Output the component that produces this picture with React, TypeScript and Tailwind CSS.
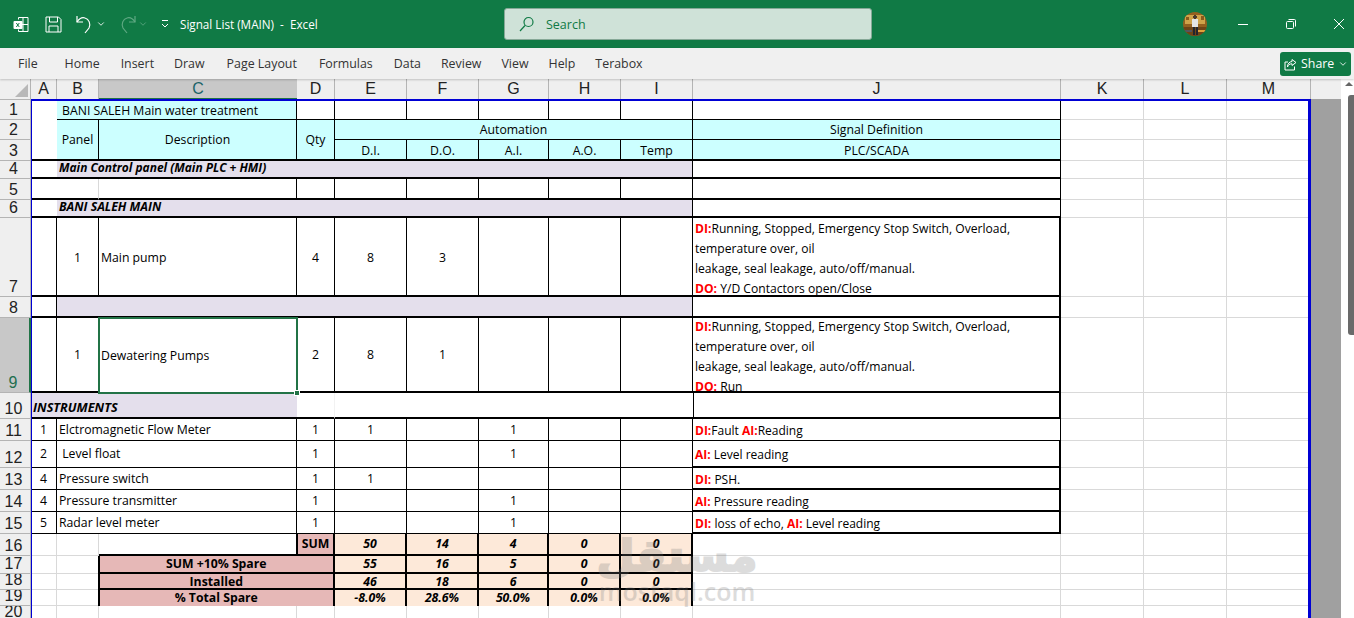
import type { ReactNode } from "react"
import { ChevronDown } from "lucide-react"

const font = "font-['Open_Sans','Noto_Sans',sans-serif]"
const thin = "border-r border-b border-black"
const thick = "border-r border-b-2 border-black"
const blank = "border-r border-b border-[#d9d9d9]"
const jThick = "border-r-2 border-b-2 border-black"
const mid = "flex items-center justify-center"
const tall = "pt-[2px]"
const cyan = "bg-[#ccffff]"
const lav = "bg-[#e4dfec]"
const peach = "bg-[#fde9d9]"
const pink = "bg-[#e6b8b7]"

const tabs = [
  ["Home", "mr-[21px]"], ["Insert", "mr-[20px]"], ["Draw", "mr-[22px]"], ["Page Layout", "mr-[22px]"], ["Formulas", "mr-[21px]"],
  ["Data", "mr-[20px]"], ["Review", "mr-[20px]"], ["View", "mr-[20px]"], ["Help", "mr-[20px]"], ["Terabox", ""],
]

function Cell({ className = "", children }: { className?: string; children?: ReactNode }) {
  return <div className={`min-w-0 overflow-hidden whitespace-nowrap text-[12.25px] leading-[14px] text-black ${className}`}>{children}</div>
}

function Num({ n, sel }: { n: number; sel?: boolean }) {
  return (
    <div className={`flex items-end justify-center overflow-hidden border-b border-[#b4b4b4] pr-[3px] font-['Liberation_Sans',sans-serif] text-[16px] leading-[18px] ${sel ? "border-r-2 border-r-[#217346] bg-[#c8c8c8] text-[#1f6f4f]" : "border-r border-r-[#b4b4b4] bg-[#efefef] text-[#222]"}`}>
      {n}
    </div>
  )
}

function Col({ l, sel }: { l: string; sel?: boolean }) {
  return (
    <div className={`flex items-center justify-center font-['Liberation_Sans',sans-serif] text-[16px] ${sel ? "border-b-2 border-[#217346] bg-[#c8c8c8] text-[#1b6468]" : "border-r border-b border-[#b4b4b4] bg-[#efefef] text-[#222]"}`}>
      {l}
    </div>
  )
}

function Red({ children }: { children: ReactNode }) {
  return <span className="font-bold text-[#ff0000]">{children}</span>
}

function Five({ v, cls }: { v: (string | number)[]; cls: string }) {
  return (
    <>
      {v.map((x, i) => (
        <Cell key={i} className={`${cls} ${mid}`}>{x}</Cell>
      ))}
    </>
  )
}

function Rest() {
  return <><Cell className={blank} /><Cell className={blank} /><Cell className={blank} /></>
}

function Instrument({ n, row, name, e, g, h, j }: { n: number; row: number; name: string; e?: string; g?: string; h: string; j: ReactNode }) {
  return (
    <>
      <Num n={n} />
      <Cell className={`${thin} ${mid}`}>{row}</Cell>
      <Cell className={`${thin} col-span-2 flex items-center pl-[2px]`}><span className="whitespace-pre">{name}</span></Cell>
      <Cell className={`${thin} ${mid}`}>1</Cell>
      <Five v={[e ?? "", "", g ?? "", "", ""]} cls={thin} />
      <Cell className={`${h} flex items-center pt-[3px] pl-[2px]`}><span className="text-[12px]">{j}</span></Cell>
      <Rest />
    </>
  )
}

const signal = (last: ReactNode, cls: string) => (
  <div className={`text-[12.12px] leading-[20px] ${cls}`}>
    <div><Red>DI:</Red>Running, Stopped, Emergency Stop Switch, Overload,</div>
    <div>temperature over, oil</div>
    <div>leakage, seal leakage, auto/off/manual.</div>
    <div>{last}</div>
  </div>
)

function Sheet() {
  return (
    <div className="relative w-[1311px] shrink-0 overflow-hidden">
      <div className={`grid h-[539px] grid-cols-[31px_26px_42px_198px_38px_72px_72px_70px_72px_72px_368px_83px_83px_84px] grid-rows-[21px_20px_20px_21px_18px_21px_18px_79px_21px_75px_26px_22px_27px_22px_22px_22px_22px_18px_16px_16px_16px] ${font}`}>
        {/* header row */}
        <div className="flex items-end justify-end border-r border-b border-[#b4b4b4] bg-[#efefef] p-[2px]">
          <div className="h-0 w-0 border-b-[13px] border-l-[13px] border-b-[#b8b8b8] border-l-transparent" />
        </div>
        {"ABCDEFGHIJKLM".split("").map((l) => <Col key={l} l={l} sel={l === "C"} />)}

        {/* 1 */}
        <Num n={1} />
        <Cell className="" />
        <Cell className={`${thin} ${cyan} col-span-2 flex items-center pt-[3px] pl-[5px]`}>BANI SALEH Main water treatment</Cell>
        <Cell className={thin} />
        <Five v={["", "", "", "", ""]} cls={thin} />
        <Cell className={thin} />
        <Rest />

        {/* 2 */}
        <Num n={2} />
        <Cell className="" />
        <Cell className={`${thick} ${cyan} row-span-2 ${mid}`}>Panel</Cell>
        <Cell className={`${thick} ${cyan} row-span-2 ${mid}`}>Description</Cell>
        <Cell className={`${thick} ${cyan} row-span-2 ${mid}`}>Qty</Cell>
        <Cell className={`${thin} ${cyan} col-span-5 ${mid}`}>Automation</Cell>
        <Cell className={`${thin} ${cyan} ${mid}`}>Signal Definition</Cell>
        <Rest />

        {/* 3 */}
        <Num n={3} />
        <Cell className="border-b-2 border-black" />
        <Five v={["D.I.", "D.O.", "A.I.", "A.O.", "Temp"]} cls={`${thick} ${cyan} pt-[3px]`} />
        <Cell className={`${thick} ${cyan} ${mid} pt-[3px]`}>PLC/SCADA</Cell>
        <Rest />

        {/* 4 */}
        <Num n={4} />
        <Cell className="border-b-2 border-black" />
        <Cell className={`${thick} ${lav} col-span-8 flex items-center pb-[2px] pl-[2px] font-bold italic`}><span className="text-[11.95px]">Main Control panel (Main PLC + HMI)</span></Cell>
        <Cell className={thick} />
        <Rest />

        {/* 5 */}
        <Num n={5} />
        <Cell className="border-b-2 border-black" />
        <Cell className="border-r border-b-2 border-r-[#d9d9d9] border-b-black" />
        <Cell className={thick} />
        <Cell className={thick} />
        <Five v={["", "", "", "", ""]} cls={thick} />
        <Cell className={thick} />
        <Rest />

        {/* 6 */}
        <Num n={6} />
        <Cell className="border-b-2 border-black" />
        <Cell className={`${thick} ${lav} col-span-8 flex items-center pb-[2px] pl-[2px] font-bold italic`}>BANI SALEH MAIN</Cell>
        <Cell className={thick} />
        <Rest />

        {/* 7 */}
        <Num n={7} />
        <Cell className={thick} />
        <Cell className={`${thick} ${mid} ${tall}`}>1</Cell>
        <Cell className={`${thick} flex items-center pl-[2px] ${tall}`}>Main pump</Cell>
        <Cell className={`${thick} ${mid} ${tall}`}>4</Cell>
        <Five v={[8, 3, "", "", ""]} cls={`${thick} ${tall}`} />
        <Cell className={`${jThick} pt-[1px] pl-[2px]`}>{signal(<><Red>DO:</Red> Y/D Contactors open/Close</>, "")}</Cell>
        <Rest />

        {/* 8 */}
        <Num n={8} />
        <Cell className={thick} />
        <Cell className={`${thick} ${lav} col-span-8`} />
        <Cell className={jThick} />
        <Rest />

        {/* 9 */}
        <Num n={9} sel />
        <Cell className={thick} />
        <Cell className={`${thick} ${mid}`}>1</Cell>
        <Cell className="relative z-10 -m-[1px] flex items-center overflow-visible border-2 border-[#217346] pl-[1px]">
          Dewatering Pumps
          <span className="absolute right-[-4px] bottom-[-4px] h-[6px] w-[6px] border border-white bg-[#217346]" />
        </Cell>
        <Cell className={`${thick} ${mid}`}>2</Cell>
        <Five v={[8, 1, "", "", ""]} cls={thick} />
        <Cell className={`${jThick} pl-[2px]`}>{signal(<><Red>DO:</Red> Run</>, "-mt-[1px]")}</Cell>
        <Rest />

        {/* 10 */}
        <Num n={10} />
        <Cell className={`border-b-2 border-black ${lav} col-span-3 flex items-end pb-[3px] pl-[2px] font-bold italic`}><span className="text-[12.7px]">INSTRUMENTS</span></Cell>
        <Cell className="border-r border-b-2 border-r-[#f2f2f2] border-b-black" />
        <Five v={["", "", "", "", ""]} cls="border-b-2 border-black" />
        <Cell className={`${jThick} border-l`} />
        <Rest />

        <Instrument n={11} row={1} name="Elctromagnetic Flow Meter" e="1" g="1" h={thin} j={<><Red>DI:</Red>Fault <Red>AI:</Red>Reading</>} />
        <Instrument n={12} row={2} name=" Level float" g="1" h={jThick} j={<><Red>AI:</Red> Level reading</>} />
        <Instrument n={13} row={4} name="Pressure switch" e="1" h={jThick} j={<><Red>DI:</Red> PSH.</>} />
        <Instrument n={14} row={4} name="Pressure transmitter" g="1" h={jThick} j={<><Red>AI:</Red> Pressure reading</>} />
        <Instrument n={15} row={5} name="Radar level meter" g="1" h={jThick} j={<><Red>DI:</Red> loss of echo, <Red>AI:</Red> Level reading</>} />

        {/* 16 */}
        <Num n={16} />
        <Cell className={blank} />
        <Cell className={blank} />
        <Cell className="border-b-2 border-black" />
        <Cell className={`-ml-[1px] border-x-2 border-b-2 border-black ${pink} ${mid} font-bold`}>SUM</Cell>
        <Five v={[50, 14, 4, 0, 0]} cls={`border-r-2 border-b-2 border-black ${peach} font-bold italic`} />
        <Cell className={blank} />
        <Rest />

        {/* 17 */}
        <Num n={17} />
        <Cell className={blank} />
        <Cell className={blank} />
        <Cell className={`-ml-[1.5px] border-x-2 border-b-2 border-black ${pink} col-span-2 ${mid} font-bold`}>SUM +10% Spare</Cell>
        <Five v={[55, 16, 5, 0, 0]} cls={`border-r-2 border-b-2 border-black ${peach} font-bold italic`} />
        <Cell className={blank} />
        <Rest />

        {/* 18 */}
        <Num n={18} />
        <Cell className={blank} />
        <Cell className={blank} />
        <Cell className={`-ml-[1.5px] border-x-2 border-b-2 border-black ${pink} col-span-2 ${mid} pt-[2px] font-bold`}>Installed</Cell>
        <Five v={[46, 18, 6, 0, 0]} cls={`border-r-2 border-b-2 border-black ${peach} pt-[2px] font-bold italic`} />
        <Cell className={blank} />
        <Rest />

        {/* 19 */}
        <Num n={19} />
        <Cell className={blank} />
        <Cell className={blank} />
        <Cell className={`-ml-[1.5px] border-x-2 border-black ${pink} col-span-2 ${mid} font-bold`}>% Total Spare</Cell>
        <Five v={["-8.0%", "28.6%", "50.0%", "0.0%", "0.0%"]} cls={`border-r-2 border-black ${peach} font-bold italic`} />
        <Cell className={blank} />
        <Rest />

        {/* 20 */}
        <Num n={20} />
        {Array.from({ length: 13 }).map((_, i) => <Cell key={i} className={blank} />)}
      </div>
      {/* print area frame */}
      <div className="pointer-events-none absolute top-[20px] right-0 bottom-0 left-[31px] z-20 border-t-2 border-r-[3px] border-l-[1.5px] border-[#0000d4]" />
      {/* watermark */}
      <div className="pointer-events-none absolute top-[449px] left-[597px] z-20 flex w-[160px] flex-col items-center text-[#777] opacity-25">
        <span className="font-['DejaVu_Sans',sans-serif] text-[44px] leading-[56px] font-bold [-webkit-text-stroke:2px_#777]">مستقل</span>
        <span className="-mt-[6px] font-['Open_Sans',sans-serif] text-[25px] leading-[26px] font-semibold">mostaql.com</span>
      </div>
    </div>
  )
}

function Avatar() {
  return (
    <svg width="24" height="24" viewBox="0 0 24 24" shapeRendering="crispEdges">
      <defs><clipPath id="av"><circle cx="12" cy="12" r="12" /></clipPath></defs>
      <g clipPath="url(#av)">
        <rect width="24" height="24" fill="#94601f" />
        <rect x="2" y="3" width="20" height="9" fill="#cfa349" />
        <rect x="3" y="5" width="3" height="3" fill="#8a5a1c" />
        <rect x="18" y="4" width="3" height="4" fill="#8a5a1c" />
        <rect x="0" y="15" width="24" height="9" fill="#6e4416" />
        <rect x="1" y="18" width="8" height="2" fill="#55555c" />
        <rect x="15" y="18" width="8" height="2" fill="#e0a23a" />
        <circle cx="12" cy="5" r="1.8" fill="#4a3a2e" />
        <rect x="9" y="7" width="6" height="8" fill="#e4e4e4" />
        <rect x="9.5" y="15" width="2" height="8" fill="#22252e" />
        <rect x="12.5" y="15" width="2" height="8" fill="#22252e" />
      </g>
    </svg>
  )
}

export default function App() {
  return (
    <div className="flex h-[618px] w-[1354px] flex-col overflow-hidden bg-white">
      {/* title bar */}
      <div className={`flex h-[48px] shrink-0 items-center bg-[#107a45] text-white ${font}`}>
        <div className="flex w-[504px] shrink-0 items-center">
          <svg className="ml-[13px]" width="16" height="17" viewBox="0 0 16 17" fill="none" stroke="#fff">
            <path d="M5.5 3.5V1.5h9.5v14H5.5v-2M10 1.5v14M5.5 8.5H15" />
            <rect x="0.5" y="5" width="9" height="8" rx="1" fill="#fff" stroke="none" />
            <path d="M3.3 7l3 4M6.3 7l-3 4" stroke="#107a45" />
          </svg>
          <svg className="ml-[16px]" width="17" height="17" viewBox="0 0 17 17" fill="none" stroke="#fff">
            <path d="M1 1h12.5L16 3.5V16H1z" />
            <path d="M4.5 1v5h8V1M4 16v-6h9v6" />
          </svg>
          <svg className="ml-[13px]" width="20" height="20" viewBox="0 0 20 20" fill="none" stroke="#fff" strokeWidth="1.2">
            <path d="M2 2v6h6" />
            <path d="M2 8c2-3 5-5 8-4 4 1 6 6 4 10l-4 5" />
          </svg>
          <ChevronDown className="ml-[1px]" size={10} strokeWidth={2} color="#fff" />
          <svg className="ml-[11px]" width="20" height="20" viewBox="0 0 20 20" fill="none" stroke="#5fa883" strokeWidth="1.2">
            <path d="M18 2v6h-6" />
            <path d="M18 8c-2-3-5-5-8-4-4 1-6 6-4 10l4 5" />
          </svg>
          <ChevronDown className="ml-[1px]" size={10} strokeWidth={2} color="#5fa883" />
          <svg className="ml-[12px]" width="10" height="10" viewBox="0 0 10 10" fill="none" stroke="#fff" strokeWidth="1">
            <path d="M2 1.5h6M2 5l3 3 3-3" />
          </svg>
          <span className="mt-[2px] ml-[10px] text-[11.7px]">Signal List (MAIN)&nbsp; -&nbsp; Excel</span>
        </div>
        <div className="flex h-[32px] w-[368px] shrink-0 items-center rounded-[3px] border border-[#86a897] bg-[#cfe2d8] pl-[14px] text-[#107a45]">
          <svg width="16" height="16" viewBox="0 0 16 16" fill="none" stroke="#107a45" strokeWidth="1.2">
            <circle cx="9.5" cy="6" r="4.5" />
            <path d="M6 9.5L1 15" />
          </svg>
          <span className="mt-[2px] ml-[11px] text-[12.5px]">Search</span>
        </div>
        <div className="flex flex-1 items-center">
          <div className="ml-[311px]"><Avatar /></div>
          <div className="ml-[31px] h-px w-[10px] bg-white" />
          <svg className="ml-[38px]" width="10" height="10" viewBox="0 0 10 10" fill="none" stroke="#fff">
            <rect x="0.5" y="2.5" width="7" height="7" rx="1" />
            <path d="M2.5 .5h6a1 1 0 0 1 1 1v6" />
          </svg>
          <svg className="ml-[38px]" width="10" height="10" viewBox="0 0 10 10" fill="none" stroke="#fff">
            <path d="M0 0l10 10M10 0L0 10" />
          </svg>
        </div>
      </div>

      {/* ribbon tabs */}
      <div className={`relative z-30 flex h-[31px] shrink-0 items-center bg-[#f0f0f0] pt-[1px] pl-[18px] text-[12.4px] text-[#333] shadow-[0_1px_2px_rgba(0,0,0,0.2)] ${font}`}>
        <span className="mr-[27px]">File</span>
        {tabs.map(([t, m]) => <span key={t} className={m}>{t}</span>)}
        <div className="mr-[3px] ml-auto flex h-[24px] w-[71px] items-center rounded-[3px] bg-[#107a45] pl-[4px] text-white">
          <svg width="13" height="13" viewBox="0 0 13 13" fill="none" stroke="#fff">
            <path d="M8 1.5l4 3-4 3V5.8C5.5 5.8 4 7 3.5 9 3.5 5.5 5.5 3.8 8 3.5zM10.5 8.5v3.5h-9.5v-8h3" />
          </svg>
          <span className="ml-[4px]">Share</span>
          <ChevronDown className="ml-[4px]" size={10} strokeWidth={2} />
        </div>
      </div>

      {/* sheet + gutter + scrollbar */}
      <div className="flex min-h-0 flex-1">
        <Sheet />
        <div className="flex w-[30px] flex-col">
          <div className="h-[20px] bg-[#efefef]" />
          <div className="flex-1 bg-[#a0a0a0]" />
        </div>
        <div className="flex w-[13px] flex-col items-end bg-white">
          <div className="mt-[3px] mr-[1px] h-0 w-0 border-x-[4px] border-b-[4px] border-x-transparent border-b-[#666]" />
          <div className="mt-[9px] h-[240px] w-[6px] rounded-l-[3px] bg-[#6a6a6a]" />
        </div>
      </div>
    </div>
  )
}
